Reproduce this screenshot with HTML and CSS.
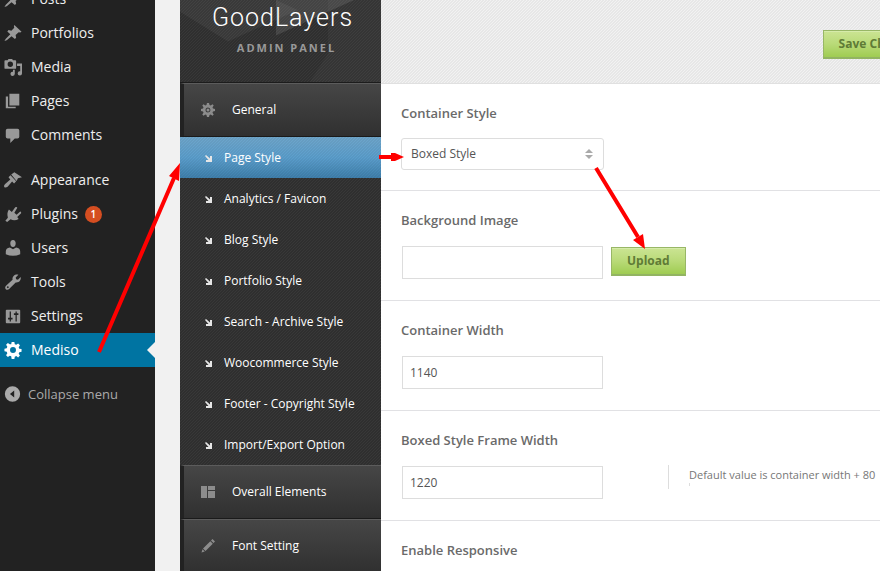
FILE: index.html
```html
<!DOCTYPE html>
<html lang="en">
<head>
<meta charset="utf-8">
<title>GoodLayers Admin Panel</title>
<link rel="stylesheet" href="styles.css">
</head>
<body>
<div class="page">
  <nav class="wp-menu" aria-label="Main menu">
    <a class="wp-item" href="#"><svg class="wp-icon" viewBox="0 0 20 20"><path d="M11.500 1l8 7.500-1.500 1-1.700-.4-3.400 3.200.6 3.100-1.400 1.400-3.700-3.300L3 18l-2.500 1L2 16.500l5-5-3.300-3.300 1.400-1.400 3.100.6 3.200-3.200L11 2.500z"/></svg>Posts</a>
    <a class="wp-item" href="#"><svg class="wp-icon" viewBox="0 0 20 20"><path d="M11.500 1l8 7.500-1.500 1-1.700-.4-3.400 3.200.6 3.100-1.400 1.400-3.700-3.300L3 18l-2.500 1L2 16.500l5-5-3.300-3.300 1.400-1.400 3.100.6 3.200-3.200L11 2.500z"/></svg>Portfolios</a>
    <a class="wp-item" href="#"><svg class="wp-icon" viewBox="0 0 20 20"><path fill-rule="evenodd" d="M1.500 2.500H4L5 1h4l1 1.500h2.500q1 0 1 1V11q0 1-1 1h-11q-1 0-1-1V3.500q0-1 1-1zM7 4a3 3 0 1 0 0 6 3 3 0 0 0 0-6z"/><path d="M14.500 6H20v11a2.400 2.400 0 1 1-2-2.300V9h-3.500zM10 13h2v4.500a2.400 2.400 0 1 1-2-2.300z"/></svg>Media</a>
    <a class="wp-item" href="#"><svg class="wp-icon" viewBox="0 0 20 20"><path d="M6 2h11v13H6zM2 5h2.500v11.500H13V18H2z"/></svg>Pages</a>
    <a class="wp-item" href="#"><svg class="wp-icon" viewBox="0 0 20 20"><path d="M4 3h11q2 0 2 2v7q0 2-2 2h-3l-5 5v-5H4q-2 0-2-2V5q0-2 2-2z"/></svg>Comments</a>
    <a class="wp-item wp-item--group" href="#"><svg class="wp-icon" viewBox="0 0 20 20"><path d="M8 4l3.500-2.500L20 7l-4.500 1-1.500 3zM7.200 4.800l6.300 6.700-2.300 2.300-2.200-2L4 17.500q-2.500 1.500-3.700.2-.8-1.500 1-3.200l5.700-5L5 7z"/></svg>Appearance</a>
    <a class="wp-item" href="#"><svg class="wp-icon" viewBox="0 0 20 20"><path d="M5.500 5l3.200 2.700L12.500 2.500q1.500-1 2.300.5L11.500 8.500l2.500 2.400 4-3.700q1.500.2 1 2l-4.300 4 1.600 2.300q-4.800 3-9 .3L3.500 19 1.500 17.500l2.800-3.300Q2.800 8.800 5.500 5z"/></svg>Plugins<span class="badge">1</span></a>
    <a class="wp-item" href="#"><svg class="wp-icon" viewBox="0 0 20 20"><path d="M10 1c2 0 3 1.500 3 3.700S12 9 10 9 7 7 7 4.700 8 1 10 1zM6.500 9.500L10 11.500l3.500-2c3 .5 4.500 2 4.500 4.500v3q-8 3.500-16 0v-3c0-2.500 1.500-4 4.500-4.500z"/></svg>Users</a>
    <a class="wp-item" href="#"><svg class="wp-icon" viewBox="0 0 20 20"><path fill-rule="evenodd" d="M16 2l-3 3 .5 2 2 .5 3-3c.8 3-1.500 6.500-5.500 6L6 17.500c-1.200 1.500-3 1.500-4 .5s-1-2.500.5-4L9.500 7.500C9 3.500 12.500 1 16 2zM3.500 15a1 1 0 1 0 1.500 1.500A1 1 0 0 0 3.500 15z"/></svg>Tools</a>
    <a class="wp-item" href="#"><svg class="wp-icon" viewBox="0 0 20 20"><path fill-rule="evenodd" d="M3 3h14q1 0 1 1v13q0 1-1 1H3q-1 0-1-1V4q0-1 1-1zM6.300 5v7H4.500v2h1.800v2h1.400v-2h1.800v-2H7.700V5zM12.800 5v2H11v2h1.800v7h1.400V9H16V7h-1.800V5z"/></svg>Settings</a>
    <a class="wp-item wp-item--current" href="#" aria-current="page"><svg class="wp-icon" viewBox="0 0 20 20"><path fill-rule="evenodd" d="M8.500 1h3l.5 2.500 1.600.7 2.100-1.500 2 2-1.400 2.200.7 1.600 2.500.5v3l-2.500.5-.7 1.600 1.400 2.100-2 2-2.100-1.400-1.600.7-.5 2.500h-3L8 17l-1.600-.7-2.100 1.400-2-2 1.400-2.100L3 12l-2.500-.5v-3L3 8l.7-1.600-1.400-2.100 2-2 2.100 1.400L8 3.500zM10 6.800a3.300 3.300 0 1 0 0 6.600 3.300 3.300 0 0 0 0-6.600z"/></svg>Mediso</a>
    <button class="wp-collapse" type="button"><svg class="wp-icon" viewBox="0 0 20 20"><path fill-rule="evenodd" d="M10 1a9 9 0 1 0 0 18 9 9 0 0 0 0-18zM12 6v8l-5-4z"/></svg>Collapse menu</button>
  </nav>

  <div class="panel">
    <aside class="side">
      <header class="brand">
        <svg class="brand-art" viewBox="0 0 201 83" preserveAspectRatio="none" aria-hidden="true"><path d="M0 12L48 42 118 10 96 0H0z" fill="#fff" opacity=".05"/><path d="M96 0v36l78-36z" fill="#fff" opacity=".1"/><path d="M148 0v54l-18 29h71V0z" fill="#fff" opacity=".03"/></svg>
        <span class="brand-name">GoodLayers</span>
        <span class="brand-sub">ADMIN PANEL</span>
      </header>
      <nav aria-label="Panel sections">
        <a class="section" href="#"><svg class="section-icon" viewBox="0 0 14 14"><path fill-rule="evenodd" d="M6 0h2l.5 2 1.200.5L11.500 1.300l1.200 1.200-1.200 1.800.5 1.200 2 .5v2l-2 .5-.5 1.200 1.200 1.800-1.200 1.200-1.800-1.200-1.200.5L8 14H6l-.5-2-1.200-.5-1.800 1.200-1.200-1.200 1.200-1.800L2 8.500 0 8V6l2-.5.5-1.200-1.200-1.800 1.200-1.200 1.800 1.200L5.500 2zM7 4.500a2.500 2.500 0 1 0 0 5 2.500 2.500 0 0 0 0-5z"/><circle cx="7" cy="7" r="1.500"/></svg>General</a>
        <ul class="sub">
          <li><a class="sub-item sub-item--current" href="#"><svg class="sub-icon" viewBox="0 0 7 7"><path d="M0 1l1-1 4 3.500V1H7V7H1V5H3.500z"/></svg>Page Style</a></li>
          <li><a class="sub-item" href="#"><svg class="sub-icon" viewBox="0 0 7 7"><path d="M0 1l1-1 4 3.500V1H7V7H1V5H3.500z"/></svg>Analytics / Favicon</a></li>
          <li><a class="sub-item" href="#"><svg class="sub-icon" viewBox="0 0 7 7"><path d="M0 1l1-1 4 3.500V1H7V7H1V5H3.500z"/></svg>Blog Style</a></li>
          <li><a class="sub-item" href="#"><svg class="sub-icon" viewBox="0 0 7 7"><path d="M0 1l1-1 4 3.500V1H7V7H1V5H3.500z"/></svg>Portfolio Style</a></li>
          <li><a class="sub-item" href="#"><svg class="sub-icon" viewBox="0 0 7 7"><path d="M0 1l1-1 4 3.500V1H7V7H1V5H3.500z"/></svg>Search - Archive Style</a></li>
          <li><a class="sub-item" href="#"><svg class="sub-icon" viewBox="0 0 7 7"><path d="M0 1l1-1 4 3.500V1H7V7H1V5H3.500z"/></svg>Woocommerce Style</a></li>
          <li><a class="sub-item" href="#"><svg class="sub-icon" viewBox="0 0 7 7"><path d="M0 1l1-1 4 3.500V1H7V7H1V5H3.500z"/></svg>Footer - Copyright Style</a></li>
          <li><a class="sub-item" href="#"><svg class="sub-icon" viewBox="0 0 7 7"><path d="M0 1l1-1 4 3.500V1H7V7H1V5H3.500z"/></svg>Import/Export Option</a></li>
        </ul>
        <a class="section" href="#"><svg class="section-icon" viewBox="0 0 14 14"><path d="M0 1h6v12H0zM7 1h7v4H7zM7 6h7v7H7z"/></svg>Overall Elements</a>
        <a class="section" href="#"><svg class="section-icon" viewBox="0 0 14 14"><path d="M11.500 0L14 2.500 12.500 4 10 1.500zM9.300 2.200l2.500 2.500L4.500 12 2 9.500zM1.500 10.200l2.300 2.300L.5 13.500z"/></svg>Font Setting</a>
      </nav>
    </aside>

    <main class="content">
      <header class="toolbar"><button class="btn" type="button">Save Changes</button></header>
      <form>
        <div class="row row--select">
          <label class="row-label" for="container-style">Container Style</label>
          <div class="select">
            <select id="container-style"><option>Boxed Style</option><option>Full Style</option></select>
            <svg class="select-arrows" viewBox="0 0 8 10" aria-hidden="true"><path d="M4 0l4 4H0zM0 6h8l-4 4z"/></svg>
          </div>
        </div>
        <div class="row">
          <label class="row-label" for="background-image">Background Image</label>
          <div class="row-body"><input class="text" id="background-image" type="text"><button class="btn" type="button">Upload</button></div>
        </div>
        <div class="row">
          <label class="row-label" for="container-width">Container Width</label>
          <div class="row-body"><input class="text" id="container-width" type="text" value="1140"></div>
        </div>
        <div class="row">
          <label class="row-label" for="frame-width">Boxed Style Frame Width</label>
          <div class="row-body"><input class="text" id="frame-width" type="text" value="1220" aria-describedby="frame-hint"><p class="hint" id="frame-hint">Default value is container width + 80</p></div>
        </div>
        <div class="row">
          <span class="row-label">Enable Responsive</span>
        </div>
      </form>
    </main>
  </div>
</div>

<svg class="arrows" width="880" height="571" viewBox="0 0 880 571" aria-hidden="true">
  <path d="M99 352L174 178M379 157H394M596 168L638 237" fill="none" stroke="#f00" stroke-width="4"/>
  <path d="M180 163l-1 18-10-5zM404 157l-9 4h-4v-8h4zM645 249l-12-9 10-6z" fill="#f00"/>
</svg>
</body>
</html>
```
FILE: styles.css
```css
* {
  box-sizing: border-box;
}

body {
  margin: 0;
  overflow: hidden;
  background: #f1f1f1;
  color: #6a6a6a;
  font: 12px/20px "Open Sans", sans-serif;
}

a {
  color: inherit;
  text-decoration: none;
}

button,
input,
select {
  font: inherit;
}

.page {
  display: flex;
  gap: 25px;
  height: 100vh;
  overflow: hidden;
}

/* WordPress menu, scrolled part of the way down */
.wp-menu {
  flex: none;
  width: 155px;
  margin-top: -18px;
  background: #222;
  color: #eee;
  font-size: 14px;
}

.wp-item,
.wp-collapse {
  display: flex;
  align-items: center;
  gap: 9px;
  height: 34px;
  padding-left: 4px;
}

.wp-icon {
  flex: none;
  width: 18px;
  height: 18px;
  fill: #999;
}

.wp-item--group {
  margin-top: 11px;
}

.wp-item--current {
  position: relative;
  background: #0074a2;
  color: #fff;
}

.wp-item--current .wp-icon {
  fill: #fff;
}

.wp-item--current::after {
  content: "";
  position: absolute;
  right: 0;
  top: 9px;
  border: 8px solid transparent;
  border-left: 0;
  border-right-color: #f1f1f1;
}

.badge {
  width: 17px;
  height: 17px;
  margin-left: -2px;
  border-radius: 50%;
  background: #d54e21;
  color: #fff;
  font-size: 10px;
  font-weight: 600;
  line-height: 17px;
  text-align: center;
}

.wp-collapse {
  gap: 7px;
  margin-top: 10px;
  border: 0;
  background: none;
  color: #aaa;
  font-size: 13px;
}

.wp-collapse .wp-icon {
  width: 17px;
  fill: #aaa;
}

/* Theme panel */
.panel {
  display: flex;
  flex: 1 0 auto;
  min-width: 786px;
}

.side {
  flex: none;
  width: 201px;
  background: linear-gradient(135deg, #2f2f2f 25%, #383838 25% 50%, #2f2f2f 50% 75%, #383838 75%) 0 0 / 3px 3px;
  color: #fff;
}

.brand {
  position: relative;
  display: flex;
  flex-direction: column;
  align-items: center;
  height: 83px;
  padding: 2px 0 0 4px;
  border-bottom: 1px solid #1c1c1c;
}

.brand-art {
  position: absolute;
  inset: 0;
  width: 100%;
  height: 100%;
}

.brand-name {
  font: 300 25px/31px Roboto, sans-serif;
  letter-spacing: 1px;
}

.brand-sub {
  margin-top: 5px;
  padding-left: 8px;
  color: #999;
  font-size: 11px;
  font-weight: 700;
  letter-spacing: 2px;
}

.section {
  display: flex;
  align-items: center;
  gap: 17px;
  height: 54px;
  padding-left: 17px;
  border-left: 4px solid #222;
  border-top: 1px solid #5c5c5c;
  border-bottom: 1px solid #1a1a1a;
  background: linear-gradient(#464646, #303030);
}

.section-icon {
  width: 14px;
  height: 14px;
  fill: #8c8c8c;
}

.sub {
  margin: 0;
  padding: 0;
  list-style: none;
}

.sub-item {
  display: flex;
  align-items: center;
  gap: 12px;
  height: 41px;
  padding-left: 25px;
}

.sub-item--current {
  background:
    linear-gradient(135deg, rgba(0, 0, 0, .05) 25%, transparent 25% 50%, rgba(0, 0, 0, .05) 50% 75%, transparent 75%) 0 0 / 3px 3px,
    linear-gradient(#6fa6cb, #5c9fcd 50%, #3f80ad);
}

.sub-icon {
  width: 7px;
  height: 7px;
  margin-top: 2px;
  fill: #e6e6e6;
}

.content {
  flex: 1;
  background: #fff;
}

.toolbar {
  display: flex;
  align-items: center;
  justify-content: flex-end;
  height: 84px;
  padding: 5px 30px 0 0;
  border-bottom: 1px solid #e0e0e0;
  background: linear-gradient(135deg, #e7e7e7 25%, #f2f2f2 25% 50%, #e7e7e7 50% 75%, #f2f2f2 75%) 0 0 / 3px 3px;
}

.btn {
  height: 29px;
  padding: 0 15px;
  border: 1px solid #98b766;
  border-bottom: 2px solid #92b462;
  background: linear-gradient(#cbe493, #b9da78 50%, #9fcc52);
  box-shadow: inset 0 1px #d6ebaa;
  color: #5f7b36;
  font-weight: 700;
}

.row {
  padding: 18px 20px 21px;
  border-bottom: 1px solid #e1e1e4;
}

.row-label {
  display: block;
  margin-bottom: 15px;
  font-size: 13px;
  font-weight: 600;
  line-height: 22px;
}

.row--select {
  padding-bottom: 20px;
}

.row--select .row-label {
  margin-bottom: 14px;
}

.row-body {
  display: flex;
  align-items: flex-start;
  padding-left: 1px;
}

.row-body .btn {
  margin: 1px 0 0 8px;
}

.text {
  width: 201px;
  height: 33px;
  padding: 0 7px;
  border: 1px solid #ddd;
  background: #fff;
  color: #555;
}

.select {
  position: relative;
  width: 203px;
}

.select select {
  display: block;
  width: 100%;
  height: 32px;
  padding: 0 9px;
  border: 1px solid #ddd;
  border-radius: 3px;
  appearance: none;
  background: #fff;
  color: #555;
}

.select-arrows {
  position: absolute;
  top: 11px;
  right: 11px;
  width: 8px;
  height: 10px;
  fill: #aaa;
  pointer-events: none;
}

.hint {
  height: 24px;
  margin: -1px 0 0 65px;
  padding-left: 20px;
  border-left: 1px solid #ddd;
  color: #777;
  font-size: 11px;
  white-space: nowrap;
}

.hint::after {
  content: "";
  display: block;
  width: 1px;
  height: 3px;
  margin-top: -2px;
  background: #ddd;
}

/* Callout arrows drawn over the page */
.arrows {
  position: absolute;
  top: 0;
  left: 0;
  pointer-events: none;
}
```
